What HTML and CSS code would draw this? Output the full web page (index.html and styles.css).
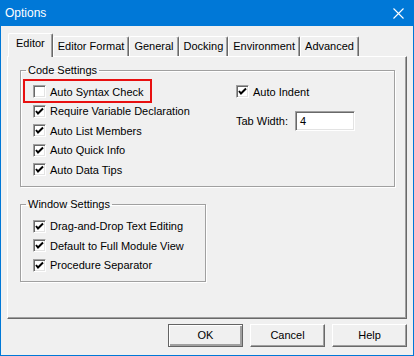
FILE: index.html
```html
<!DOCTYPE html>
<html>
<head>
<meta charset="utf-8">
<link rel="stylesheet" href="styles.css">
</head>
<body>
<div class="window">
  <div class="titlebar">
    <span class="title">Options</span>
    <svg class="close" width="11" height="11" viewBox="0 0 11 11"><path d="M0.5 0.5 L10.5 10.5 M10.5 0.5 L0.5 10.5" stroke="#fff" stroke-width="1.1" fill="none"/></svg>
  </div>
  <div class="main">
    <div class="tabs">
      <div class="tab active">Editor</div>
      <div class="tab">Editor Format</div>
      <div class="tab">General</div>
      <div class="tab">Docking</div>
      <div class="tab">Environment</div>
      <div class="tab">Advanced</div>
    </div>
    <div class="panel">
      <fieldset class="group code">
        <legend>Code Settings</legend>
        <div class="cols">
          <div class="col">
            <div class="row hl"><span class="cb"></span><span>Auto Syntax Check</span></div>
            <div class="row"><span class="cb"><svg width="11" height="11" viewBox="0 0 11 11"><path d="M2 5 L4 7.5 L9 2.5" stroke="#000" stroke-width="2" fill="none"/></svg></span><span>Require Variable Declaration</span></div>
            <div class="row"><span class="cb"><svg width="11" height="11" viewBox="0 0 11 11"><path d="M2 5 L4 7.5 L9 2.5" stroke="#000" stroke-width="2" fill="none"/></svg></span><span>Auto List Members</span></div>
            <div class="row"><span class="cb"><svg width="11" height="11" viewBox="0 0 11 11"><path d="M2 5 L4 7.5 L9 2.5" stroke="#000" stroke-width="2" fill="none"/></svg></span><span>Auto Quick Info</span></div>
            <div class="row"><span class="cb"><svg width="11" height="11" viewBox="0 0 11 11"><path d="M2 5 L4 7.5 L9 2.5" stroke="#000" stroke-width="2" fill="none"/></svg></span><span>Auto Data Tips</span></div>
          </div>
          <div class="col">
            <div class="row"><span class="cb"><svg width="11" height="11" viewBox="0 0 11 11"><path d="M2 5 L4 7.5 L9 2.5" stroke="#000" stroke-width="2" fill="none"/></svg></span><span>Auto Indent</span></div>
            <div class="field"><span>Tab Width:</span><span class="input">4</span></div>
          </div>
        </div>
      </fieldset>
      <fieldset class="group win">
        <legend>Window Settings</legend>
        <div class="col">
          <div class="row"><span class="cb"><svg width="11" height="11" viewBox="0 0 11 11"><path d="M2 5 L4 7.5 L9 2.5" stroke="#000" stroke-width="2" fill="none"/></svg></span><span>Drag-and-Drop Text Editing</span></div>
          <div class="row"><span class="cb"><svg width="11" height="11" viewBox="0 0 11 11"><path d="M2 5 L4 7.5 L9 2.5" stroke="#000" stroke-width="2" fill="none"/></svg></span><span>Default to Full Module View</span></div>
          <div class="row"><span class="cb"><svg width="11" height="11" viewBox="0 0 11 11"><path d="M2 5 L4 7.5 L9 2.5" stroke="#000" stroke-width="2" fill="none"/></svg></span><span>Procedure Separator</span></div>
        </div>
      </fieldset>
    </div>
    <div class="buttons">
      <div class="btn default">OK</div>
      <div class="btn">Cancel</div>
      <div class="btn">Help</div>
    </div>
  </div>
</div>
</body>
</html>
```
FILE: styles.css
```css
html, body {
  margin: 0;
  padding: 0;
  background: #f0f0f0;
}
.window {
  width: 414px;
  height: 356px;
  box-sizing: border-box;
  border: 1px solid #0078d7;
  border-top: 0;
  background: #f0f0f0;
  font-family: "Liberation Sans", Arial, sans-serif;
  font-size: 11px;
  color: #000;
  display: flex;
  flex-direction: column;
}
.titlebar {
  height: 26px;
  background: #0078d7;
  display: flex;
  align-items: center;
  justify-content: space-between;
  padding: 0 9px 0 4px;
  color: #fff;
  font-size: 12px;
}
.close {
  display: block;
  margin-top: 1px;
}
.main {
  padding: 7px 6px 0 6px;
}
.tabs {
  display: flex;
  align-items: flex-end;
  height: 23px;
  padding-left: 1px;
}
.tab {
  height: 20px;
  box-sizing: border-box;
  padding: 0 4px;
  line-height: 18px;
  border-top: 1px solid #fff;
  border-left: 1px solid #fff;
  border-right: 1px solid #696969;
  box-shadow: inset -1px 0 0 #a0a0a0;
  border-radius: 2px 2px 0 0;
  white-space: nowrap;
}
.tab.active {
  height: 24px;
  margin-bottom: -1px;
  position: relative;
  z-index: 1;
  background: #f0f0f0;
  padding: 0 7px 4px 7px;
}
.panel {
  height: 263px;
  box-sizing: border-box;
  border-top: 1px solid #fff;
  border-left: 1px solid #fff;
  border-right: 1px solid #696969;
  border-bottom: 1px solid #696969;
  box-shadow: inset -1px -1px 0 #a0a0a0;
  padding: 7px 0 0 12px;
}
.group {
  margin: 0;
  padding: 0 12px;
  min-width: 0;
  border: 1px solid #a0a0a0;
  box-shadow: 1px 1px 0 #fff, inset 1px 1px 0 #fff;
}
.group legend {
  margin-left: -7px;
  padding: 0 2px;
  line-height: 13px;
}
.code {
  width: 375px;
  box-sizing: border-box;
  padding-top: 5px;
  padding-bottom: 6px;
}
.win {
  width: 186px;
  box-sizing: border-box;
  margin-top: 11px;
  padding-top: 6px;
  padding-bottom: 6px;
}
.cols {
  display: grid;
  grid-template-columns: 203px auto;
}
.col {
  display: flex;
  flex-direction: column;
}
.row {
  height: 19.5px;
  display: flex;
  align-items: center;
  gap: 4px;
  white-space: nowrap;
  position: relative;
}
.hl {
  align-self: flex-start;
}
.hl::after {
  content: "";
  position: absolute;
  left: -10px;
  right: -8px;
  top: -3px;
  bottom: -1px;
  border: 2px solid #e81010;
}
.cb {
  width: 13px;
  height: 13px;
  box-sizing: border-box;
  background: #fff;
  border-top: 1px solid #a0a0a0;
  border-left: 1px solid #a0a0a0;
  border-right: 1px solid #fff;
  border-bottom: 1px solid #fff;
  box-shadow: inset 1px 1px 0 #696969, inset -1px -1px 0 #e3e3e3;
  display: flex;
  align-items: center;
  justify-content: center;
  flex: none;
}
.cb svg {
  display: block;
}
.field {
  margin-top: 9px;
  display: flex;
  align-items: center;
  gap: 7px;
}
.input {
  width: 60px;
  height: 20px;
  box-sizing: border-box;
  background: #fff;
  border-top: 1px solid #a0a0a0;
  border-left: 1px solid #a0a0a0;
  border-right: 1px solid #fff;
  border-bottom: 1px solid #fff;
  box-shadow: inset 1px 1px 0 #696969, inset -1px -1px 0 #e3e3e3;
  padding-left: 4px;
  line-height: 18px;
}
.buttons {
  display: flex;
  justify-content: flex-end;
  gap: 7px;
  margin-top: 5px;
}
.btn {
  width: 75px;
  height: 23px;
  box-sizing: border-box;
  text-align: center;
  line-height: 21px;
  border-top: 1px solid #fff;
  border-left: 1px solid #fff;
  border-right: 1px solid #696969;
  border-bottom: 1px solid #696969;
  box-shadow: inset -1px -1px 0 #a0a0a0;
}
.btn.default {
  border: 1px solid #646464;
  box-shadow: inset 1px 1px 0 #fff, inset -2px -2px 0 #a0a0a0;
}
```
